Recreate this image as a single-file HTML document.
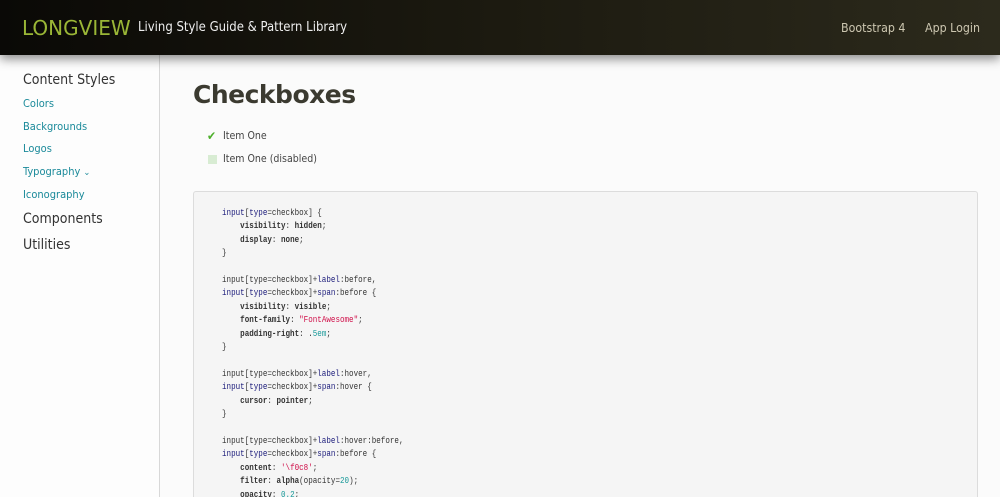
<!DOCTYPE html>
<html><head><style>
*{margin:0;padding:0;box-sizing:border-box}
html,body{width:1000px;height:497px;overflow:hidden}
body{background:#fbfbfb;font-family:"DejaVu Sans Condensed","Liberation Sans",sans-serif;position:relative}
.hd{position:absolute;left:0;top:0;width:1000px;height:55px;background:linear-gradient(90deg,#0a0906,#1c1a10 50%,#2c2a1c);box-shadow:0 4px 10px rgba(0,0,0,.45);z-index:2}
.logo{position:absolute;left:22px;top:16px;color:#9ab636;font-family:"DejaVu Sans","Liberation Sans",sans-serif;font-size:20px}
.tt{position:absolute;left:138px;top:20px;color:#eee;font-size:13px}
.nv{position:absolute;top:21px;color:#ccc6b0;font-size:12.3px}
.sb{position:absolute;left:0;top:55px;width:160px;height:442px;background:rgba(255,255,255,.6);border-right:1px solid #d8d8d8}
.sb div{position:absolute;left:23px}
.h{font-size:14px;color:#333}
.l{font-size:11px;color:#1b8a9a}
h1{position:absolute;left:193px;top:80px;font-family:"DejaVu Sans","Liberation Sans",sans-serif;font-weight:bold;font-size:25px;color:#3b3a30;letter-spacing:-.5px}
.it{position:absolute;left:223px;font-size:10.5px;color:#444}
.code{position:absolute;left:193px;top:191px;width:785px;height:320px;background:#f5f5f5;border:1px solid #dcdcdc;border-radius:3px;overflow:hidden}
pre{position:absolute;left:28px;top:15px;font-family:"Liberation Mono",monospace;font-size:9px;line-height:13.4px;color:#333;transform:scaleX(.84);transform-origin:0 0}
.k{color:#1a1a7a}.b{font-weight:bold}.s{color:#d0104a}.n{color:#1a9a9a}
</style></head><body>
<div class="hd"><div class="logo">LONGVIEW</div><div class="tt">Living Style Guide &amp; Pattern Library</div><div class="nv" style="left:841px">Bootstrap 4</div><div class="nv" style="left:925px">App Login</div></div>
<div class="sb">
<div class="h" style="top:17px">Content Styles</div>
<div class="l" style="top:42px">Colors</div>
<div class="l" style="top:65px">Backgrounds</div>
<div class="l" style="top:87px">Logos</div>
<div class="l" style="top:110px">Typography <span style="font-size:9px">&#8964;</span></div>
<div class="l" style="top:133px">Iconography</div>
<div class="h" style="top:156px">Components</div>
<div class="h" style="top:182px">Utilities</div>
</div>
<h1>Checkboxes</h1>
<div style="position:absolute;left:207px;top:129px;color:#4caf2a;font-size:12px;font-weight:bold">&#10004;</div>
<div class="it" style="top:130px">Item One</div>
<div style="position:absolute;left:208px;top:155px;width:9px;height:9px;background:#d8ecd3"></div>
<div class="it" style="top:153px">Item One (disabled)</div>
<div class="code"><pre><span class="k">input</span>[<span class="k">type</span>=checkbox] {
    <span class="b">visibility</span>: <span class="b">hidden</span>;
    <span class="b">display</span>: <span class="b">none</span>;
}

input[type=checkbox]+<span class="k">label</span>:before,
<span class="k">input</span>[<span class="k">type</span>=checkbox]+<span class="k">span</span>:before {
    <span class="b">visibility</span>: <span class="b">visible</span>;
    <span class="b">font-family</span>: <span class="s">"FontAwesome"</span>;
    <span class="b">padding-right</span>: .<span class="n">5em</span>;
}

input[type=checkbox]+<span class="k">label</span>:hover,
<span class="k">input</span>[<span class="k">type</span>=checkbox]+<span class="k">span</span>:hover {
    <span class="b">cursor</span>: <span class="b">pointer</span>;
}

input[type=checkbox]+<span class="k">label</span>:hover:before,
<span class="k">input</span>[<span class="k">type</span>=checkbox]+<span class="k">span</span>:before {
    <span class="b">content</span>: <span class="s">'\f0c8'</span>;
    <span class="b">filter</span>: <span class="b">alpha</span>(opacity=<span class="n">20</span>);
    <span class="b">opacity</span>: <span class="n">0.2</span>;
</pre></div>
</body></html>
